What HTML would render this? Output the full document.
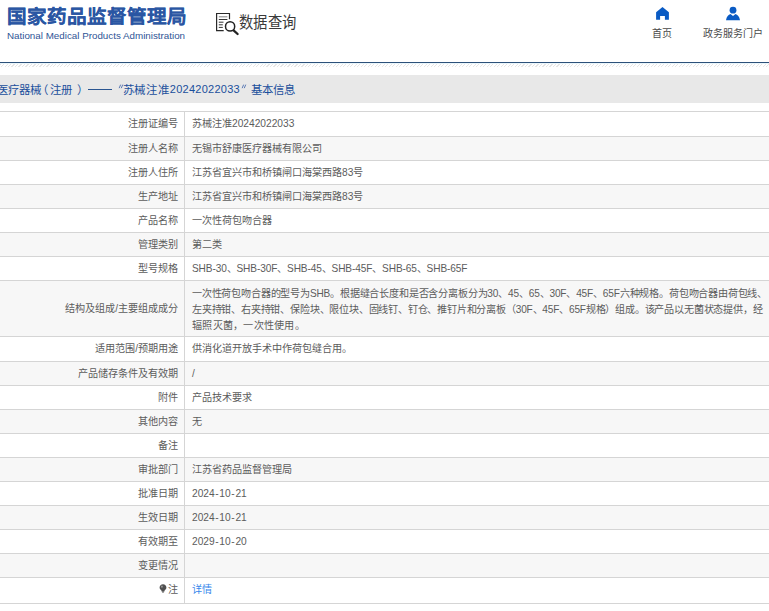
<!DOCTYPE html>
<html lang="zh-CN">
<head>
<meta charset="utf-8">
<style>
html,body{margin:0;padding:0;background:#fff;}
body{width:769px;height:611px;overflow:hidden;position:relative;font-family:"Liberation Sans",sans-serif;}
.abs{position:absolute;white-space:nowrap;}
#cn{left:7.2px;top:5.2px;font-size:18.5px;font-weight:700;color:#2a56a3;-webkit-text-stroke:0.08px #2a56a3;line-height:24px;letter-spacing:-0.1px;transform:scaleX(1.06);transform-origin:0 0;}
#en{left:7px;top:29.9px;font-size:9.8px;color:#2f5596;line-height:12px;}
#sj{left:238.7px;top:11.8px;font-size:15px;color:#3a3a3a;line-height:20px;transform:scale(0.955,1.04);transform-origin:0 0;}
#home{left:652px;top:27.5px;font-size:10px;color:#4a4a4a;line-height:12px;}
#portal{left:703px;top:27.5px;font-size:10px;color:#4a4a4a;line-height:12px;}
#line{left:0;top:62px;width:769px;height:1px;background:#2c5079;}
#stripe{left:0;top:64px;width:769px;height:3px;background:repeating-linear-gradient(-45deg,#fff 0,#fff 1.7px,#e6e6e6 1.7px,#e6e6e6 2.47px);}
#cyan{left:0;top:63px;width:769px;height:1px;background:#eaf6fb;}
#bar{left:0;top:75px;width:769px;height:28px;background:#e8e8e8;}
.cr{position:absolute;top:81.5px;font-size:11.4px;color:#1a4f9c;line-height:16px;white-space:nowrap;}
.row{position:absolute;left:0;width:769px;border-top:1px solid #d5d5d5;box-sizing:border-box;}
.row.g{background:#f7f7f7;}
.lab{position:absolute;right:591px;top:0;text-align:right;font-size:10.1px;color:#5c5c5c;white-space:nowrap;}
.val{position:absolute;left:192px;top:0;font-size:10.1px;color:#5c5c5c;white-space:nowrap;}
.val.tall{top:5px;line-height:16px;}
.tl{white-space:nowrap;height:16px;}
.div{position:absolute;left:184px;top:0;width:1px;height:100%;background:#d5d5d5;}
.d{font-size:10.2px;}
.h{margin:0 0.65px;}
.lnk{color:#3787ec;}
.bulb{vertical-align:0px;margin-right:1px;}
</style>
</head>
<body>
<div id="cn" class="abs">国家药品监督管理局</div>
<div id="en" class="abs">National Medical Products Administration</div>
<svg class="abs" style="left:210px;top:8px" width="32" height="30" viewBox="0 0 32 30">
  <path d="M13.7 22.6 H6.6 V5.5 H19.5 V11.3" fill="none" stroke="#2a2a2a" stroke-width="1.2"/>
  <path d="M8.8 8.8 H17.4" stroke="#8a8a8a" stroke-width="1.1"/>
  <path d="M8.8 11.5 H17.4 M8.8 14.2 H13.5 M8.8 16.8 H12.8 M8.8 19.4 H12.8" stroke="#333" stroke-width="1"/>
  <circle cx="20.1" cy="18.4" r="4.6" fill="#fff" stroke="#222" stroke-width="1.5"/>
  <path d="M23.6 22.4 L27.6 26" stroke="#222" stroke-width="2.3" stroke-linecap="round"/>
</svg>
<div id="sj" class="abs">数据查询</div>
<svg class="abs" style="left:655px;top:6px" width="15" height="15" viewBox="0 0 15 15">
  <path d="M7.5 1.1 L13.9 6.3 V13.8 H9.9 V10 H5.1 V13.8 H1.1 V6.3 Z" fill="#0a5bc4"/>
</svg>
<div id="home" class="abs">首页</div>
<svg class="abs" style="left:725px;top:6px" width="16" height="16" viewBox="0 0 16 16">
  <circle cx="8" cy="4.2" r="3.4" fill="#0a5bc4"/>
  <path d="M1 14.3 C1.5 10.5 3.5 8.6 5.5 8 L8 10 L10.5 8 C12.5 8.6 14.5 10.5 15 14.3 Z" fill="#0a5bc4"/>
</svg>
<div id="portal" class="abs">政务服务门户</div>
<div id="line" class="abs"></div>
<div id="stripe" class="abs"></div>
<div id="cyan" class="abs"></div>
<div id="bar" class="abs"></div>
<div class="cr" style="left:-3px">医疗器械</div>
<div class="cr" style="left:36.5px">（</div>
<div class="cr" style="left:50px">注册</div>
<div class="cr" style="left:76.6px">）</div>
<div class="abs" style="left:88px;top:88.8px;width:24px;height:1.3px;background:#2a5590"></div>
<svg class="abs" style="left:118px;top:84px" width="6" height="5" viewBox="0 0 6 5"><path d="M1.3 3.8 L2.5 1.0 M3.4 3.8 L4.6 1.0" stroke="#4a6cae" stroke-width="0.9" stroke-linecap="round"/></svg>
<div class="cr" style="left:122.5px;letter-spacing:0.8px">苏械注准</div>
<div class="cr" style="left:169.8px;top:80.6px;font-size:11px;letter-spacing:0.26px">20242022033</div>
<svg class="abs" style="left:240.5px;top:84px" width="6" height="5" viewBox="0 0 6 5"><path d="M1.3 3.8 L2.5 1.0 M3.4 3.8 L4.6 1.0" stroke="#4a6cae" stroke-width="0.9" stroke-linecap="round"/></svg>
<div class="cr" style="left:251.3px">基本信息</div>
<div id="table">
<div class="row" style="top:111px;height:25px"><div class="div"></div><div class="lab" style="line-height:24px">注册证编号</div><div class="val" style="line-height:24px">苏械注准<span class="d">20242022033</span></div></div>
<div class="row g" style="top:136px;height:24px"><div class="div"></div><div class="lab" style="line-height:23px">注册人名称</div><div class="val" style="line-height:23px">无锡市舒康医疗器械有限公司</div></div>
<div class="row" style="top:160px;height:24px"><div class="div"></div><div class="lab" style="line-height:23px">注册人住所</div><div class="val" style="line-height:23px">江苏省宜兴市和桥镇闸口海棠西路<span class="d">83</span>号</div></div>
<div class="row g" style="top:184px;height:24px"><div class="div"></div><div class="lab" style="line-height:23px">生产地址</div><div class="val" style="line-height:23px">江苏省宜兴市和桥镇闸口海棠西路<span class="d">83</span>号</div></div>
<div class="row" style="top:208px;height:24px"><div class="div"></div><div class="lab" style="line-height:23px">产品名称</div><div class="val" style="line-height:23px">一次性荷包吻合器</div></div>
<div class="row g" style="top:232px;height:24px"><div class="div"></div><div class="lab" style="line-height:23px">管理类别</div><div class="val" style="line-height:23px">第二类</div></div>
<div class="row" style="top:256px;height:24px"><div class="div"></div><div class="lab" style="line-height:23px">型号规格</div><div class="val" style="line-height:23px"><span style="letter-spacing:-0.12px">SHB-30、SHB-30F、SHB-45、SHB-45F、SHB-65、SHB-65F</span></div></div>
<div class="row g" style="top:280px;height:56px"><div class="div"></div><div class="lab" style="line-height:55px">结构及组成/主要组成成分</div><div class="val tall"><div class="tl" style="letter-spacing:-0.174px">一次性荷包吻合器的型号为SHB。根据缝合长度和是否含分离板分为30、45、65、30F、45F、65F六种规格。荷包吻合器由荷包线、</div><div class="tl" style="letter-spacing:-0.19px">左夹持钳、右夹持钳、保险块、限位块、固线钉、钉仓、推钉片和分离板（30F、45F、65F规格）组成。该产品以无菌状态提供，经</div><div class="tl" style="letter-spacing:0.27px">辐照灭菌，一次性使用。</div></div></div>
<div class="row" style="top:336px;height:25px"><div class="div"></div><div class="lab" style="line-height:24px">适用范围/预期用途</div><div class="val" style="line-height:24px">供消化道开放手术中作荷包缝合用。</div></div>
<div class="row g" style="top:361px;height:24px"><div class="div"></div><div class="lab" style="line-height:23px">产品储存条件及有效期</div><div class="val" style="line-height:23px">/</div></div>
<div class="row" style="top:385px;height:24px"><div class="div"></div><div class="lab" style="line-height:23px">附件</div><div class="val" style="line-height:23px">产品技术要求</div></div>
<div class="row g" style="top:409px;height:24px"><div class="div"></div><div class="lab" style="line-height:23px">其他内容</div><div class="val" style="line-height:23px">无</div></div>
<div class="row" style="top:433px;height:24px"><div class="div"></div><div class="lab" style="line-height:23px">备注</div><div class="val" style="line-height:23px"></div></div>
<div class="row g" style="top:457px;height:24px"><div class="div"></div><div class="lab" style="line-height:23px">审批部门</div><div class="val" style="line-height:23px">江苏省药品监督管理局</div></div>
<div class="row" style="top:481px;height:24px"><div class="div"></div><div class="lab" style="line-height:23px">批准日期</div><div class="val" style="line-height:23px"><span class="d">2024<span class="h">-</span>10<span class="h">-</span>21</span></div></div>
<div class="row g" style="top:505px;height:24px"><div class="div"></div><div class="lab" style="line-height:23px">生效日期</div><div class="val" style="line-height:23px"><span class="d">2024<span class="h">-</span>10<span class="h">-</span>21</span></div></div>
<div class="row" style="top:529px;height:24px"><div class="div"></div><div class="lab" style="line-height:23px">有效期至</div><div class="val" style="line-height:23px"><span class="d">2029<span class="h">-</span>10<span class="h">-</span>20</span></div></div>
<div class="row g" style="top:553px;height:24px"><div class="div"></div><div class="lab" style="line-height:23px">变更情况</div><div class="val" style="line-height:23px"></div></div>
<div class="row" style="top:577px;height:26px"><div class="div"></div><div class="lab" style="line-height:23px"><svg class="bulb" width="8" height="9" viewBox="0 0 8 9"><path d="M4 0.2C6 0.2 7.4 1.6 7.4 3.5C7.4 4.8 6.6 5.6 5.7 6.3L5.5 7.2H2.5L2.3 6.3C1.4 5.6 0.6 4.8 0.6 3.5C0.6 1.6 2 0.2 4 0.2Z M2.7 7.6H5.3L4.9 8.4H3.1Z" fill="#505050"/><ellipse cx="2.9" cy="2.6" rx="0.9" ry="1.2" fill="#9a9a9a"/></svg>注</div><div class="val" style="line-height:23px"><span class="lnk">详情</span></div></div>
<div class="row" style="top:603px;height:1px"></div>
</div>
</body>
</html>
